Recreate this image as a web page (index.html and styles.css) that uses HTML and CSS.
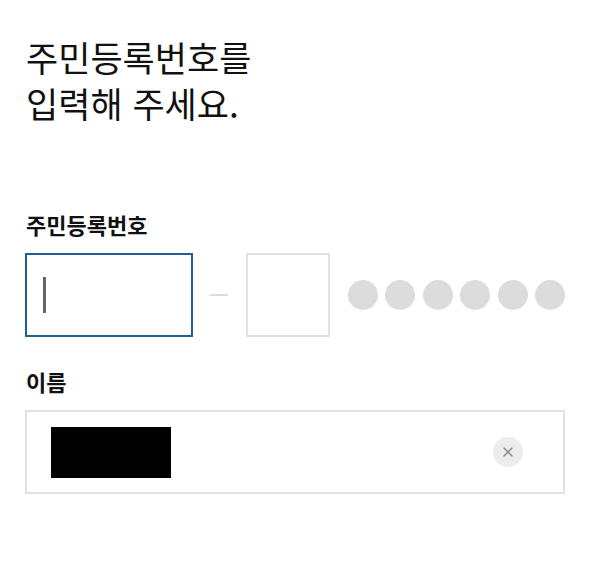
FILE: index.html
```html
<!DOCTYPE html>
<html lang="ko">
<head>
<meta charset="utf-8">
<link rel="stylesheet" href="styles.css">
</head>
<body>
<main class="page">
  <h1 class="title">주민등록번호를<br>입력해 주세요.</h1>

  <section class="field field-rrn">
    <div class="label">주민등록번호</div>
    <div class="rrn-row">
      <div class="box box-front focused"><span class="caret"></span></div>
      <span class="dash"></span>
      <div class="box box-back"></div>
      <div class="dots">
        <span class="dot"></span><span class="dot"></span><span class="dot"></span>
        <span class="dot"></span><span class="dot"></span><span class="dot"></span>
      </div>
    </div>
  </section>

  <section class="field field-name">
    <div class="label">이름</div>
    <div class="name-box">
      <span class="masked"></span>
      <button class="clear" aria-label="지우기">
        <svg width="12" height="12" viewBox="0 0 12 12"><path d="M2 2L10 10M10 2L2 10" stroke="#8a8a8a" stroke-width="1.5" stroke-linecap="round"/></svg>
      </button>
    </div>
  </section>
</main>
</body>
</html>
```

FILE: styles.css
```css
* { box-sizing: border-box; }
html, body { margin: 0; padding: 0; background: #fff; }
body {
  font-family: "Noto Sans CJK KR", "Noto Sans", sans-serif;
  color: #111;
}
.page {
  padding: 34px 29px 0 25px;
}
.title {
  margin: 0 0 0 1px;
  font-size: 35px;
  font-weight: 400;
  line-height: 46px;
  color: #111;
}
.field-rrn { margin-top: 84px; }
.label {
  font-size: 22px;
  font-weight: 700;
  line-height: 28px;
  margin-left: 1px;
  color: #111;
}
.rrn-row {
  margin-top: 15px;
  display: flex;
  align-items: center;
  height: 84px;
}
.box {
  height: 84px;
  border: 2px solid #e1e1e1;
  background: #fff;
  flex: none;
}
.box-front {
  width: 168px;
  border-color: #1f5f91;
  display: flex;
  align-items: center;
  padding-left: 16px;
}
.caret {
  width: 3px;
  height: 36px;
  background: #666;
}
.dash {
  flex: none;
  width: 18px;
  height: 2px;
  background: #dcdcdc;
  margin: 0 18px 0 17px;
}
.box-back { width: 84px; }
.dots {
  flex: 1;
  display: flex;
  justify-content: space-between;
  margin-left: 18px;
}
.dot {
  width: 30px;
  height: 30px;
  border-radius: 50%;
  background: #dcdcdc;
}
.field-name { margin-top: 30px; }
.name-box {
  margin-top: 15px;
  height: 84px;
  border: 2px solid #e1e1e1;
  display: flex;
  align-items: center;
  justify-content: space-between;
  padding: 0 40px 0 24px;
}
.masked {
  width: 120px;
  height: 51px;
  background: #000;
}
.clear {
  width: 30px;
  height: 30px;
  border-radius: 50%;
  border: 0;
  background: #ececec;
  padding: 0;
  display: flex;
  align-items: center;
  justify-content: center;
}
```
